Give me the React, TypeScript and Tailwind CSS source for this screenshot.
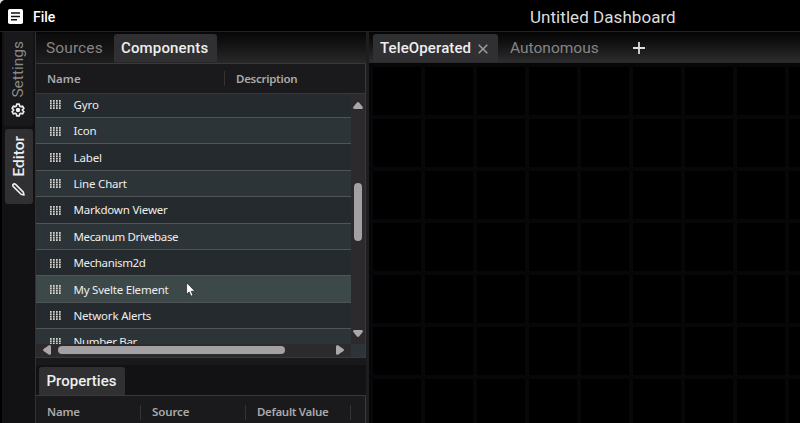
import React from "react";

const ROWS = [
  { name: "Gyro", tracking: "tracking-[-0.12px]" },
  { name: "Icon", tracking: "tracking-[-0.12px]" },
  { name: "Label", tracking: "tracking-[-0.12px]" },
  { name: "Line Chart", tracking: "tracking-[-0.2px]" },
  { name: "Markdown Viewer", tracking: "tracking-[-0.2px]" },
  { name: "Mecanum Drivebase", tracking: "tracking-[-0.36px]" },
  { name: "Mechanism2d", tracking: "tracking-[-0.36px]" },
  { name: "My Svelte Element", tracking: "tracking-[-0.23px]", active: true },
  { name: "Network Alerts", tracking: "tracking-[-0.2px]" },
  { name: "Number Bar", tracking: "tracking-[-0.3px]" },
];

const DOT_COLUMNS = [0, 3, 6, 9];
const DOT_ROWS = [0, 2.4, 4.8, 7.2];

function DragHandle() {
  return (
    <svg className="ml-[14px] h-[9px] w-[11px] shrink-0" viewBox="0 0 11 9" fill="#d6d3ca">
      {DOT_COLUMNS.map((x) =>
        DOT_ROWS.map((y) => <rect key={`${x}-${y}`} x={x} y={y} width="1.7" height="1.8" />)
      )}
    </svg>
  );
}

function FileIcon() {
  return (
    <svg className="h-[15px] w-[15px]" viewBox="0 0 15 15">
      <rect width="15" height="15" rx="1.8" fill="#fff" />
      <path d="M3 4.1h9M3 7.4h9M3 10.7h6" stroke="#111" strokeWidth="1.5" />
    </svg>
  );
}

function GearIcon() {
  return (
    <svg className="mr-px h-[14px] w-[14px]" viewBox="0 0 24 24" fill="none" stroke="#eee" strokeWidth="2.8" strokeLinejoin="round">
      <path d="M9.8 2h4.4l.6 3.2 2 1.2 3.1-1.1 2.2 3.8-2.5 2.1v1.6l2.5 2.1-2.2 3.8-3.1-1.1-2 1.2-.6 3.2H9.8l-.6-3.2-2-1.2-3.1 1.1-2.2-3.8 2.5-2.1v-1.6L1.9 9.1l2.2-3.8 3.1 1.1 2-1.2z" />
      <circle cx="12" cy="12" r="2.4" fill="#eee" />
    </svg>
  );
}

function PencilIcon() {
  return (
    <svg className="h-[13px] w-[13px]" viewBox="0 0 13 13" fill="none" stroke="#eee" strokeWidth="1.6" strokeLinejoin="round">
      <path d="M1.200 1.300Q2.400 .3 3.600 1.400L11.300 9.100L12 12L9.100 11.300L1.400 3.600Q.3 2.400 1.200 1.300z" />
    </svg>
  );
}

export default function App() {
  return (
    <div className="relative flex h-[423px] w-[800px] flex-col overflow-hidden bg-black font-[Roboto,sans-serif] text-[#eee]">
      <header className="flex h-[31px] shrink-0 items-center pl-2 pt-[2px]">
        <FileIcon />
        <span className="ml-[10px] w-[497px] text-[14px] font-medium leading-5 text-white">File</span>
        <h1 className="whitespace-nowrap text-[17px] leading-5 tracking-[0.05px] text-[#ddd]">Untitled Dashboard</h1>
      </header>
      <div className="flex min-h-0 flex-1 border-t border-[#222123]">
        <aside className="ml-[2px] flex w-[33px] shrink-0 flex-col items-center bg-[#121114]">
          <div className="flex h-[94px] w-[29px] flex-col items-center justify-end rounded-b-[3px] bg-[#19181a] pb-[9px]">
            <span className="mb-[5px] mr-px rotate-180 text-[15.5px] leading-6 text-[#888] [writing-mode:vertical-rl]">Settings</span>
            <GearIcon />
          </div>
          <div className="mt-[3px] flex h-[75px] w-[28px] flex-col items-center justify-end rounded-[3px] bg-[#302f31] pb-[8px]">
            <span className="mb-[6px] rotate-180 text-[15.5px] font-medium leading-6 text-[#eee] [writing-mode:vertical-rl]">Editor</span>
            <PencilIcon />
          </div>
        </aside>
        <main className="flex w-[331px] shrink-0 flex-col border-l border-[#303032] bg-[#19181a]">
          <div className="flex h-[31px] shrink-0 bg-linear-to-b from-[#070707] to-[#292829] pt-[2px] text-[15px] font-medium leading-[29px]">
            <span className="w-[78px] bg-[#111]/40 pl-[10px] text-[15.5px] font-normal tracking-[0.1px] text-[#858585]">Sources</span>
            <span className="h-[28px] w-[103px] rounded-t-[3px] bg-[#302f31] pl-[7px] tracking-[0.15px] text-[#eee]">Components</span>
          </div>
          <section className="flex h-[295px] shrink-0 flex-col border-r border-t border-b border-[#39383a] bg-[#1a191b] font-['Noto_Sans',sans-serif]">
            <div className="flex h-[30px] shrink-0 items-center border-b border-[#39383a] text-[11.5px] font-semibold text-[#aaa]">
              <span className="w-[188px] pl-[11px]">Name</span>
              <span className="h-[15px] w-px bg-[#333]" />
              <span className="pl-[11px] tracking-[-0.28px]">Description</span>
            </div>
            <div className="flex h-[250px] shrink-0">
              <div className="w-[315px] overflow-hidden">
                <div className="-mt-[2.4px]">
                  {ROWS.map((row, index) => (
                    <div
                      key={row.name}
                      className={`flex h-[26.4px] items-center border-b border-[#505456] pt-px ${
                        row.active ? "bg-[#3d4848]" : index % 2 ? "bg-[#2d3438]" : "bg-[#242a2d]"
                      }`}
                    >
                      <DragHandle />
                      <span className={`ml-[12.5px] whitespace-nowrap text-[11.5px] leading-4 text-[#eee] ${row.tracking}`}>{row.name}</span>
                    </div>
                  ))}
                </div>
              </div>
              <div className="flex flex-1 flex-col items-center bg-[#2c2a2c]">
                <svg className="mt-[8px] h-[7px] w-[10px]" viewBox="0 0 10 7" fill="#aaa7aa"><path d="M4 .5Q5-.4 6 .5L9.700 5Q10.300 7 8.500 7H1.500Q-.3 7 .3 5z" /></svg>
                <span className="mt-[74px] h-[58px] w-[8px] rounded-full bg-[#a4a1a4]" />
                <svg className="mt-auto mb-[7px] h-[7px] w-[10px]" viewBox="0 0 10 7" fill="#aaa7aa"><path d="M4 6.500Q5 7.400 6 6.500L9.700 2Q10.300 0 8.500 0H1.500Q-.3 0 .3 2z" /></svg>
              </div>
            </div>
            <div className="flex h-[13px] shrink-0">
              <div className="flex w-[315px] items-center bg-[#2c2a2c] pb-px pl-[7px]">
                <svg className="h-[10px] w-[8px]" viewBox="0 0 8 10" fill="#aaa7aa"><path d="M.5 6Q-.4 5 .5 4L6 .3Q8-.3 8 1.500V8.500Q8 10.300 6 9.700z" /></svg>
                <span className="ml-[7px] h-[8px] w-[227px] rounded-full bg-[#a4a1a4]" />
                <svg className="ml-[51px] h-[10px] w-[8px]" viewBox="0 0 8 10" fill="#aaa7aa"><path d="M7.500 6Q8.400 5 7.500 4L2 .3Q0-.3 0 1.500V8.500Q0 10.300 2 9.700z" /></svg>
              </div>
              <div className="flex-1 bg-[#2d3438]" />
            </div>
          </section>
          <section className="mt-[7px] flex flex-1 flex-col bg-[#121114]">
            <div className="h-[31px] shrink-0 border-b border-[#39383a] pl-[3px] pt-[2px]">
              <h2 className="h-[28px] w-[86px] rounded-t-[3px] bg-[#302f31] pl-[7.5px] text-[15px] font-medium leading-[29px] text-[#eee]">Properties</h2>
            </div>
            <div className="flex h-[32px] items-center border-r border-[#39383a] bg-[#1a191b] font-['Noto_Sans',sans-serif] text-[11.5px] font-semibold text-[#aaa]">
              <span className="w-[104px] pl-[11px] tracking-[-0.2px]">Name</span>
              <span className="h-[15px] w-px bg-[#333]" />
              <span className="w-[104px] pl-[11px] tracking-[-0.1px]">Source</span>
              <span className="h-[15px] w-px bg-[#333]" />
              <span className="w-[104px] whitespace-nowrap pl-[11px] tracking-[-0.32px]">Default Value</span>
              <span className="h-[15px] w-px bg-[#333]" />
            </div>
          </section>
        </main>
        <div className="w-[3px] shrink-0 bg-[#1e1d1f]" />
        <section className="flex min-w-0 flex-1 flex-col">
          <div className="flex h-[31px] shrink-0 border-b border-[#29282a] bg-linear-to-b from-[#050505] to-[#2d2c2e] pl-[4px] pt-[2px] text-[15px] leading-[29px]">
            <div className="flex h-[28px] w-[125px] items-center rounded-t-[3px] bg-[#302f31] pl-[7px]">
              <span className="w-[91px] font-medium tracking-[0.12px]">TeleOperated</span>
              <svg className="ml-[7px] mt-px h-[10px] w-[10px]" viewBox="0 0 10 10" stroke="#999" strokeWidth="1.6"><path d="M.7.7l8.600 8.600M9.300.7L.7 9.300" /></svg>
            </div>
            <span className="w-[135px] pl-[12px] text-[15.5px] text-[#858585]">Autonomous</span>
            <svg className="mt-[8px] h-[12px] w-[12px]" viewBox="0 0 12 12" stroke="#ddd" strokeWidth="1.8"><path d="M6 0v12M0 6h12" /></svg>
          </div>
          <div className="flex-1 bg-[linear-gradient(to_right,#070608_4px,transparent_4px),linear-gradient(to_bottom,#070608_4px,transparent_4px)] bg-[size:52px_52px]" />
        </section>
      </div>
      <svg className="absolute left-[186px] top-[282px] h-[15px] w-[10px]" viewBox="0 0 10 15"><path d="M.6.7V12.300L3.200 9.900L5 14.200L7 13.300L5.200 9.200H9z" fill="#fff" stroke="#222" strokeWidth=".7" /></svg>
      <svg className="absolute left-0 top-0 h-[5px] w-[5px]" viewBox="0 0 5 5"><path d="M0 0H4Q1 1 0 4z" fill="#ddd" /></svg>
    </div>
  );
}
